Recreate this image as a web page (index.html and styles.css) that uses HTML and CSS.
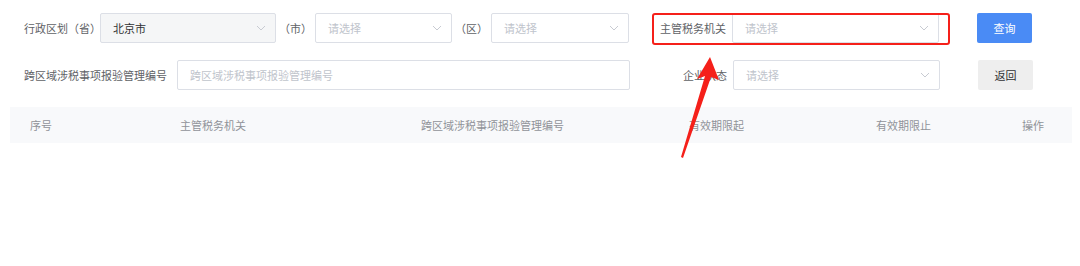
FILE: index.html
```html
<!DOCTYPE html>
<html lang="zh">
<head>
<meta charset="utf-8">
<title>跨区域涉税事项报验管理</title>
<link rel="stylesheet" href="styles.css">
</head>
<body>
<div class="page">
  <div class="form">
    <div class="row">
      <span class="label l-prov">行政区划（省）</span>
      <div class="select w176 disabled"><span class="val">北京市</span><svg class="chev" viewBox="0 0 10 6"><path d="M1 1l4 4 4-4" fill="none" stroke="#c8cbd2" stroke-width="1"/></svg></div>
      <span class="label l-paren">（市）</span>
      <div class="select w137"><span class="ph">请选择</span><svg class="chev" viewBox="0 0 10 6"><path d="M1 1l4 4 4-4" fill="none" stroke="#c8cbd2" stroke-width="1"/></svg></div>
      <span class="label l-paren">（区）</span>
      <div class="select w138"><span class="ph">请选择</span><svg class="chev" viewBox="0 0 10 6"><path d="M1 1l4 4 4-4" fill="none" stroke="#c8cbd2" stroke-width="1"/></svg></div>
      <span class="label l-right">主管税务机关</span>
      <div class="select w207"><span class="ph">请选择</span><svg class="chev" viewBox="0 0 10 6"><path d="M1 1l4 4 4-4" fill="none" stroke="#c8cbd2" stroke-width="1"/></svg></div>
      <button class="btn primary">查询</button>
    </div>
    <div class="row">
      <span class="label l-code">跨区域涉税事项报验管理编号</span>
      <div class="select w453"><span class="ph">跨区域涉税事项报验管理编号</span></div>
      <span class="label l-right2">企业状态</span>
      <div class="select w207"><span class="ph">请选择</span><svg class="chev" viewBox="0 0 10 6"><path d="M1 1l4 4 4-4" fill="none" stroke="#c8cbd2" stroke-width="1"/></svg></div>
      <button class="btn plain">返回</button>
    </div>
  </div>
  <div class="thead">
    <div class="th">序号</div>
    <div class="th">主管税务机关</div>
    <div class="th">跨区域涉税事项报验管理编号</div>
    <div class="th">有效期限起</div>
    <div class="th">有效期限止</div>
    <div class="th">操作</div>
  </div>
  <div class="highlight"></div>
  <svg class="arrow" width="1080" height="266" viewBox="0 0 1080 266">
    <polygon points="710,57 719,80 711,77 683,158 681,157 705,76 697,79" fill="#f5201a"/>
  </svg>
</div>
</body>
</html>
```
FILE: styles.css
```css
html, body {
  margin: 0;
  padding: 0;
  background: #ffffff;
}
body {
  font-family: "Noto Sans CJK SC", "Noto Sans", sans-serif;
  font-size: 11px;
  color: #606266;
}
.page {
  position: relative;
  width: 1080px;
  height: 266px;
  overflow: hidden;
}
.form {
  padding: 13px 0 0 24px;
  display: flex;
  flex-direction: column;
  gap: 17px;
}
.row {
  display: flex;
  align-items: center;
  height: 30px;
}
.row > * { flex-shrink: 0; }
.label {
  color: #606266;
  white-space: nowrap;
  line-height: 30px;
}
.l-prov { width: 76px; }
.l-paren { width: 39px; text-align: center; }
.l-right { width: 81px; text-align: right; padding-right: 6px; box-sizing: border-box; margin-left: 22px; }
.l-code { width: 153px; }
.l-right2 { width: 103px; text-align: right; padding-right: 6px; box-sizing: border-box; }
.select {
  box-sizing: border-box;
  height: 30px;
  border: 1px solid #dcdfe6;
  border-radius: 2px;
  background: #fff;
  display: flex;
  align-items: center;
  justify-content: space-between;
  padding: 0 9px 0 12px;
}
.select.disabled { background: #f5f6f7; }
.w176 { width: 176px; }
.w137 { width: 137px; }
.w138 { width: 138px; }
.w207 { width: 207px; }
.w453 { width: 453px; }
.val { color: #303133; }
.ph { color: #c0c4cc; }
.chev { width: 10px; height: 6px; }
.btn {
  box-sizing: border-box;
  width: 55px;
  height: 30px;
  margin-left: 38px;
  border: none;
  border-radius: 2px;
  font-family: inherit;
  font-size: 11px;
  padding: 0;
}
.btn.primary { background: #4a8bf5; color: #ffffff; }
.btn.plain { background: #eeeeee; color: #303133; }
.thead {
  margin: 17px 0 0 10px;
  width: 1062px;
  height: 36px;
  background: #f8f9fb;
  display: grid;
  grid-template-columns: 150px 241px 268px 187px 146px 70px;
  align-items: center;
}
.th {
  padding-left: 20px;
  color: #909399;
  white-space: nowrap;
}
.highlight {
  position: absolute;
  left: 652px;
  top: 13px;
  width: 298px;
  height: 32px;
  box-sizing: border-box;
  border: 2px solid #f5201a;
  border-radius: 3px;
}
.arrow {
  position: absolute;
  left: 0;
  top: 0;
  pointer-events: none;
}
```
